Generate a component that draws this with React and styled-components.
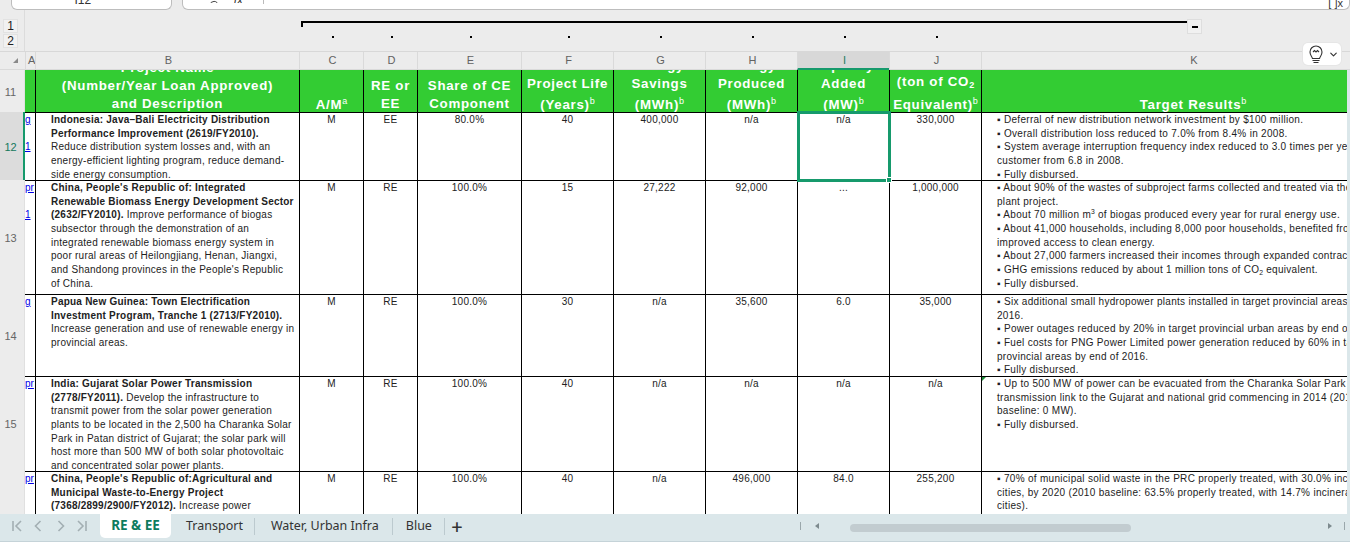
import React from 'react';
import styled, { createGlobalStyle } from 'styled-components';
import { Search, ChevronDown } from 'lucide-react';

const COLUMNS = '25px 10px 264px 64px 54px 104px 92px 92px 92px 92px 92px 423px';

const GlobalStyle = createGlobalStyle`
  html, body {
    margin: 0;
    padding: 0;
    background: #ececec;
    font-family: "Liberation Sans", Arial, sans-serif;
  }
`;

const Page = styled.div`
  position: relative;
  width: 1350px;
  height: 542px;
  display: flex;
  flex-direction: column;
  overflow: hidden;
  background: #ececec;
`;

const TopBar = styled.div`
  height: 10px;
  display: flex;
  gap: 10px;
  padding-left: 11px;
  flex: none;
`;

const TopCard = styled.div`
  box-sizing: border-box;
  height: 10px;
  width: ${({ $width }) => $width}px;
  background: #fff;
  border: 1px solid #bdbdbd;
  border-top: none;
  border-radius: 0 0 6px 6px;
  display: flex;
  align-items: flex-end;
  overflow: hidden;
  font-size: 12px;
  color: #333;
`;

const NameBox = styled.span`
  width: 100%;
  padding-right: 17px;
  box-sizing: border-box;
  text-align: center;
  height: 2px;
  line-height: 0;
  margin-bottom: 7px;
`;

const FormulaTools = styled.div`
  display: flex;
  align-items: flex-end;
  width: 100%;
  height: 9px;
  padding-left: 26px;
  gap: 14px;
`;

const ClippedTool = styled.span`
  display: block;
  height: 3px;
  overflow: hidden;
  margin-bottom: 6px;
  font-style: italic;
  line-height: 0;
`;

const ToolDivider = styled.span`
  width: 1px;
  height: 4px;
  margin: 0 0 5px 6px;
  background: #bbb;
`;

const ExpandMark = styled.span`
  margin-left: auto;
  margin-right: 6px;
  margin-bottom: 6px;
  line-height: 0;
  font-size: 11px;
  color: #333;
`;

const OutlineBand = styled.div`
  box-sizing: border-box;
  height: 42px;
  flex: none;
  display: flex;
  border-bottom: 1px solid #d8d8d8;
`;

const LevelGutter = styled.div`
  box-sizing: border-box;
  width: 25px;
  padding: 9px 0 0 3px;
  display: flex;
  flex-direction: column;
  gap: 1px;
  border-right: 1px solid #dcdcdc;
`;

const LevelButton = styled.div`
  box-sizing: border-box;
  width: 15px;
  height: 14px;
  background: #f1f1f1;
  border: 1px solid #e2e2e2;
  font-size: 12px;
  line-height: 12px;
  text-align: center;
  color: #222;
`;

const OutlinePane = styled.div`
  flex: 1;
  display: flex;
  flex-direction: column;
  padding-top: 9px;
`;

const BracketRow = styled.div`
  display: flex;
  padding-left: 276px;
`;

const Bracket = styled.div`
  box-sizing: border-box;
  width: 886px;
  height: 6px;
  margin-top: 2px;
  border-top: 2px solid #000;
  border-left: 2px solid #000;
`;

const MinusBox = styled.div`
  box-sizing: border-box;
  width: 15px;
  height: 15px;
  background: #f1f1f1;
  border: 1px solid #dedede;
  display: flex;
  align-items: center;
  justify-content: center;
  &::before {
    content: '';
    width: 6px;
    height: 2px;
    background: #000;
  }
`;

const DotRow = styled.div`
  display: grid;
  grid-template-columns: 274px 64px 54px 104px 92px 92px 92px 92px 92px;
  margin-top: 2px;
`;

const DotCell = styled.div`
  display: flex;
  justify-content: center;
  padding-left: 3px;
  &::before {
    content: '';
    width: ${({ $empty }) => ($empty ? 0 : 2)}px;
    height: 2px;
    background: #000;
  }
`;

const ColumnHeaderRow = styled.div`
  display: grid;
  grid-template-columns: ${COLUMNS};
  height: 18px;
  flex: none;
  overflow: hidden;
`;

const ColumnHead = styled.div`
  box-sizing: border-box;
  height: 18px;
  padding-left: 2px;
  background: ${({ $active }) => ($active ? '#d8d8d8' : '#ececec')};
  border-left: 1px solid #dadada;
  border-bottom: ${({ $active }) => ($active ? '2px solid #169a6c' : '1px solid #dadada')};
  font-size: 11px;
  line-height: 17px;
  text-align: center;
  color: ${({ $active }) => ($active ? '#1b7d62' : '#626262')};
`;

const Corner = styled(ColumnHead)`
  border-left: 0;
  display: flex;
  align-items: center;
  justify-content: flex-end;
  padding-right: 7px;
  &::before {
    content: '';
    border-left: 5px solid transparent;
    border-bottom: 5px solid #8a8a8a;
  }
`;

const SheetArea = styled.div`
  flex: 1;
  min-height: 0;
  display: flex;
`;

const SheetClip = styled.div`
  width: 1347px;
  overflow: hidden;
`;

const Sheet = styled.div`
  display: grid;
  width: 1356px;
  grid-template-columns: ${COLUMNS};
  grid-template-rows: 42px 68px 114px 82px 95px 43px;
`;

const VerticalTrack = styled.div`
  flex: 1;
  background: #dbe7ea;
`;

const RowHead = styled.div`
  box-sizing: border-box;
  display: flex;
  align-items: center;
  justify-content: center;
  padding: 1px 3px 0 0;
  font-size: 11px;
  background: ${({ $active }) => ($active ? '#dcdcdc' : '#ececec')};
  color: ${({ $active }) => ($active ? '#14795c' : '#666')};
  border-right: 1px solid ${({ $active }) => ($active ? '#169a6c' : '#e0e0e0')};
  ${({ $active }) => $active && 'box-shadow: inset -1px 0 0 #169a6c;'}
`;

const HeaderCell = styled.div`
  box-sizing: border-box;
  background: #33cc33;
  border-left: 1px solid ${({ $plain }) => ($plain ? '#33cc33' : '#000')};
  display: flex;
  flex-direction: column;
  justify-content: flex-end;
  align-items: center;
  overflow: hidden;
  color: #fff;
  font-weight: 700;
  font-size: 13.3px;
  letter-spacing: 0.73px;
  white-space: nowrap;
`;

const HeaderLine = styled.div`
  flex: none;
  box-sizing: border-box;
  height: ${({ $height }) => $height}px;
  padding-top: ${({ $height }) => $height - 18}px;
  margin-bottom: ${({ $height }) => ($height > 18 ? -1 : 0)}px;
  line-height: 20px;
`;

const Sup = styled.sup`
  font-size: 0.68em;
  font-weight: 400;
  line-height: 0;
  vertical-align: 0.55em;
  letter-spacing: 0;
`;

const Sub = styled.sub`
  font-size: 0.68em;
  line-height: 0;
  vertical-align: -0.25em;
  letter-spacing: 0;
`;

const Cell = styled.div`
  position: relative;
  box-sizing: border-box;
  min-width: 0;
  overflow: ${({ $selected }) => ($selected ? 'visible' : 'hidden')};
  z-index: ${({ $selected }) => ($selected ? 2 : 'auto')};
  background: #fff;
  border-left: 1px solid #000;
  border-top: 1px solid #000;
  font-size: 10px;
  line-height: 13.67px;
  letter-spacing: ${({ $spacing }) => $spacing || 0.25}px;
  color: #222;
  white-space: nowrap;
  text-align: ${({ $align }) => $align || 'left'};
  padding-left: ${({ $indent }) => $indent || 0}px;
  ${({ $selected }) =>
    $selected &&
    `&::after {
      content: '';
      position: absolute;
      inset: -2px -2px -2px -1px;
      border: 3px solid #169a6c;
    }
    &::before {
      content: '';
      box-sizing: border-box;
      position: absolute;
      right: -3px;
      bottom: -3px;
      width: 6px;
      height: 6px;
      background: #169a6c;
      border: 1px solid #fff;
      z-index: 1;
    }`}
  ${({ $comment }) =>
    $comment &&
    `&::before {
      content: '';
      position: absolute;
      left: 0;
      top: 0;
      border-top: 4px solid #1f8f3a;
      border-right: 4px solid transparent;
    }`}
`;

const LinkCell = styled.div`
  box-sizing: border-box;
  overflow: hidden;
  background: #fff;
  border-top: 1px solid #000;
  font-size: 10px;
  line-height: 13.67px;
  white-space: nowrap;
`;

const CutLink = styled.div`
  height: 13.67px;
  color: #0000e6;
  text-decoration: underline;
`;

const Bold = styled.span`
  font-weight: 700;
  letter-spacing: 0.23px;
`;

const Line = styled.div`
  height: 13.67px;
`;

const TabBar = styled.div`
  box-sizing: border-box;
  height: 28px;
  flex: none;
  display: flex;
  background: #dbe7ea;
  border-bottom: 1px solid #c5d3d8;
  font-family: "Noto Sans", "Liberation Sans", sans-serif;
`;

const NavGroup = styled.div`
  width: 100px;
  height: 24px;
  flex: none;
  display: flex;
  align-items: center;
  padding-left: 10px;
  box-sizing: border-box;
  gap: 7px;
  color: #a3afb3;
`;

const NavIcon = styled.svg`
  width: 14px;
  height: 14px;
  fill: none;
  stroke: currentColor;
  stroke-width: 1.6;
  &:nth-child(3) {
    margin-left: 2px;
  }
`;

const ActiveTab = styled.div`
  box-sizing: border-box;
  width: 71px;
  height: 24px;
  flex: none;
  background: #fff;
  border-radius: 0 0 5px 5px;
  text-align: center;
  font-size: 13.5px;
  font-weight: 700;
  line-height: 23px;
  color: #0e7c5e;
`;

const Tab = styled.div`
  flex: none;
  height: 24px;
  box-sizing: border-box;
  padding: 0 ${({ $right }) => $right}px 0 ${({ $left }) => $left}px;
  font-size: 12.5px;
  line-height: 23px;
  color: #333;
  position: relative;
  &::after {
    content: '';
    position: absolute;
    right: 0;
    top: 4px;
    width: 1px;
    height: 17px;
    background: #bccacf;
  }
`;

const AddTab = styled.div`
  width: 24px;
  height: 24px;
  flex: none;
  text-align: center;
  font-size: 20px;
  line-height: 25px;
  font-weight: 500;
  color: #333;
`;

const ScrollGroup = styled.div`
  flex: 1;
  height: 24px;
  display: flex;
  align-items: center;
  padding-left: ${({ $left }) => $left}px;
  box-sizing: border-box;
`;

const ScrollDivider = styled.div`
  width: 1px;
  height: 8px;
  background: #9aa7ab;
  margin: ${({ $margin }) => $margin};
`;

const ScrollArrow = styled.div`
  width: 0;
  height: 0;
  margin-left: ${({ $gap }) => $gap || 0}px;
  border-top: 3px solid transparent;
  border-bottom: 3px solid transparent;
  ${({ $right }) => ($right ? 'border-left' : 'border-right')}: 4px solid #7d8a8e;
`;

const ScrollThumb = styled.div`
  width: 281px;
  height: 8px;
  border-radius: 4px;
  background: #c2ccd0;
  margin: 4px 0 0 31px;
`;

const IdeaButton = styled.div`
  position: absolute;
  left: 1303px;
  top: 43px;
  width: 38px;
  height: 22px;
  box-sizing: border-box;
  padding-left: 4px;
  border-radius: 5px;
  background: #fff;
  box-shadow: 0 0 0 1px #e6e6e6;
  display: flex;
  align-items: center;
  gap: 3px;
  color: #333;
`;

const headers = [
  { plain: true, lines: [] },
  { lines: ['Project Name', '(Number/Year Loan Approved)', 'and Description'] },
  { lines: [<React.Fragment key="a">A/M<Sup>a</Sup></React.Fragment>], last: 21 },
  { lines: ['RE or', 'EE'] },
  { lines: ['Share of CE', 'Component'] },
  { lines: ['Project Life', <React.Fragment key="b">(Years)<Sup>b</Sup></React.Fragment>], last: 21 },
  { lines: ['Energy', 'Savings', <React.Fragment key="b">(MWh)<Sup>b</Sup></React.Fragment>], last: 21 },
  { lines: ['Energy', 'Produced', <React.Fragment key="b">(MWh)<Sup>b</Sup></React.Fragment>], last: 21 },
  { lines: ['Capacity', 'Added', <React.Fragment key="b">(MW)<Sup>b</Sup></React.Fragment>], last: 21 },
  { lines: [<React.Fragment key="c">(ton of CO<Sub>2</Sub></React.Fragment>, <React.Fragment key="b">Equivalent)<Sup>b</Sup></React.Fragment>], last: 23 },
  { lines: [<React.Fragment key="b">Target Results<Sup>b</Sup></React.Fragment>], last: 21 },
];

const rows = [
  {
    num: 12,
    active: true,
    link: ['g', '', '1'],
    project: [
      ['Indonesia: Java–Bali Electricity Distribution', ''],
      ['Performance Improvement (2619/FY2010).', ''],
      ['', 'Reduce distribution system losses and, with an'],
      ['', 'energy-efficient lighting program, reduce demand-'],
      ['', 'side energy consumption.'],
    ],
    values: ['M', 'EE', '80.0%', '40', '400,000', 'n/a', 'n/a', '330,000'],
    results: [
      '▪ Deferral of new distribution network investment by $100 million.',
      '▪ Overall distribution loss reduced to 7.0% from 8.4% in 2008.',
      '▪ System average interruption frequency index reduced to 3.0 times per year per',
      'customer from 6.8 in 2008.',
      '▪ Fully disbursed.',
    ],
  },
  {
    num: 13,
    link: ['pr', '', '1'],
    project: [
      ["China, People's Republic of: Integrated", ''],
      ['Renewable Biomass Energy Development Sector', ''],
      ['(2632/FY2010).', ' Improve performance of biogas'],
      ['', 'subsector through the demonstration of an'],
      ['', 'integrated renewable biomass energy system in'],
      ['', 'poor rural areas of Heilongjiang, Henan, Jiangxi,'],
      ['', "and Shandong provinces in the People's Republic"],
      ['', 'of China.'],
    ],
    values: ['M', 'RE', '100.0%', '15', '27,222', '92,000', '...', '1,000,000'],
    results: [
      '▪ About 90% of the wastes of subproject farms collected and treated via the biogas',
      'plant project.',
      <React.Fragment key="m">▪ About 70 million m<Sup>3</Sup> of biogas produced every year for rural energy use.</React.Fragment>,
      '▪ About 41,000 households, including 8,000 poor households, benefited from',
      'improved access to clean energy.',
      '▪ About 27,000 farmers increased their incomes through expanded contract',
      <React.Fragment key="c">▪ GHG emissions reduced by about 1 million tons of CO<Sub>2</Sub> equivalent.</React.Fragment>,
      '▪ Fully disbursed.',
    ],
  },
  {
    num: 14,
    link: ['g'],
    project: [
      ['Papua New Guinea: Town Electrification', ''],
      ['Investment Program, Tranche 1 (2713/FY2010).', ''],
      ['', 'Increase generation and use of renewable energy in'],
      ['', 'provincial areas.'],
    ],
    values: ['M', 'RE', '100.0%', '30', 'n/a', '35,600', '6.0', '35,000'],
    results: [
      '▪ Six additional small hydropower plants installed in target provincial areas by',
      '2016.',
      '▪ Power outages reduced by 20% in target provincial urban areas by end of 2016.',
      '▪ Fuel costs for PNG Power Limited power generation reduced by 60% in target',
      'provincial areas by end of 2016.',
      '▪ Fully disbursed.',
    ],
  },
  {
    num: 15,
    link: ['pr'],
    comment: true,
    project: [
      ['India: Gujarat Solar Power Transmission', ''],
      ['(2778/FY2011).', ' Develop the infrastructure to'],
      ['', 'transmit power from the solar power generation'],
      ['', 'plants to be located in the 2,500 ha Charanka Solar'],
      ['', 'Park in Patan district of Gujarat; the solar park will'],
      ['', 'host more than 500 MW of both solar photovoltaic'],
      ['', 'and concentrated solar power plants.'],
    ],
    values: ['M', 'RE', '100.0%', '40', 'n/a', 'n/a', 'n/a', 'n/a'],
    results: [
      '▪ Up to 500 MW of power can be evacuated from the Charanka Solar Park over a',
      'transmission link to the Gujarat and national grid commencing in 2014 (2010',
      'baseline: 0 MW).',
      '▪ Fully disbursed.',
    ],
  },
  {
    num: '',
    link: ['pr'],
    project: [
      ["China, People's Republic of:Agricultural and", ''],
      ['Municipal Waste-to-Energy Project', ''],
      ['(7368/2899/2900/FY2012).', ' Increase power'],
    ],
    values: ['M', 'RE', '100.0%', '40', 'n/a', '496,000', '84.0', '255,200'],
    results: [
      '▪ 70% of municipal solid waste in the PRC properly treated, with 30.0% incinerated in',
      'cities, by 2020 (2010 baseline: 63.5% properly treated, with 14.7% incinerated in',
      'cities).',
    ],
  },
];

const letters = ['A', 'B', 'C', 'D', 'E', 'F', 'G', 'H', 'I', 'J', 'K'];

const BulbIcon = () => (
  <svg width="18" height="20" viewBox="0 0 18 20" fill="none" stroke="#333" strokeWidth="1.1">
    <path d="M5.500 14.500C5 12.500 3 11.500 3 8a6 6 0 0 1 12 0c0 3.500-2 4.500-2.500 6.500z" />
    <path d="M6 8l1.500-1.500L9 8l1.500-1.500L12 8" />
    <path d="M5.500 16.500h7M6.500 18.500h5" />
  </svg>
);

const App = () => (
  <Page>
    <GlobalStyle />
    <TopBar>
      <TopCard $width={161}>
        <NameBox>I12</NameBox>
      </TopCard>
      <TopCard $width={1170}>
        <FormulaTools>
          <ClippedTool><Search size={11} /></ClippedTool>
          <ClippedTool>fx</ClippedTool>
          <ToolDivider />
          <ExpandMark>[ ]x</ExpandMark>
        </FormulaTools>
      </TopCard>
    </TopBar>

    <OutlineBand>
      <LevelGutter>
        <LevelButton>1</LevelButton>
        <LevelButton>2</LevelButton>
      </LevelGutter>
      <OutlinePane>
        <BracketRow>
          <Bracket />
          <MinusBox />
        </BracketRow>
        <DotRow>
          <DotCell $empty />
          {[0, 1, 2, 3, 4, 5, 6, 7].map((n) => (
            <DotCell key={n} />
          ))}
        </DotRow>
      </OutlinePane>
    </OutlineBand>

    <ColumnHeaderRow>
      <Corner />
      {letters.map((l) => (
        <ColumnHead key={l} $active={l === 'I'}>{l}</ColumnHead>
      ))}
    </ColumnHeaderRow>

    <SheetArea>
      <SheetClip>
        <Sheet>
          <RowHead>11</RowHead>
          {headers.map((h, i) => (
            <HeaderCell key={i} $plain={h.plain}>
              {h.lines.map((line, j) => (
                <HeaderLine key={j} $height={h.last && j === h.lines.length - 1 ? h.last : 18}>{line}</HeaderLine>
              ))}
            </HeaderCell>
          ))}

          {rows.map((row) => (
            <React.Fragment key={row.project[0][0]}>
              <RowHead $active={row.active}>{row.num}</RowHead>
              <LinkCell>
                {row.link.map((t, i) => (
                  <CutLink key={i}>{t}</CutLink>
                ))}
              </LinkCell>
              <Cell $indent={15}>
                {row.project.map(([bold, text], i) => (
                  <Line key={i}>
                    <Bold>{bold}</Bold>
                    {text}
                  </Line>
                ))}
              </Cell>
              {row.values.map((v, i) => (
                <Cell key={i} $align="center" $selected={row.active && i === 6}>{v}</Cell>
              ))}
              <Cell $indent={15} $spacing={0.3} $comment={row.comment}>
                {row.results.map((r, i) => (
                  <Line key={i}>{r}</Line>
                ))}
              </Cell>
            </React.Fragment>
          ))}
        </Sheet>
      </SheetClip>
      <VerticalTrack />
    </SheetArea>

    <TabBar>
      <NavGroup>
        <NavIcon viewBox="0 0 14 14"><path d="M3 2v10M11 2L6 7l5 5" /></NavIcon>
        <NavIcon viewBox="0 0 14 14"><path d="M9.500 2L4.500 7l5 5" /></NavIcon>
        <NavIcon viewBox="0 0 14 14"><path d="M4.500 2l5 5-5 5" /></NavIcon>
        <NavIcon viewBox="0 0 14 14"><path d="M11 2v10M3 2l5 5-5 5" /></NavIcon>
      </NavGroup>
      <ActiveTab>RE &amp; EE</ActiveTab>
      <Tab $left={15} $right={12}>Transport</Tab>
      <Tab $left={16} $right={14}>Water, Urban Infra</Tab>
      <Tab $left={13} $right={13}>Blue</Tab>
      <AddTab>+</AddTab>
      <ScrollGroup $left={331}>
        <ScrollDivider $margin="0 14px 0 0" />
        <ScrollArrow />
        <ScrollThumb />
        <ScrollArrow $right $gap={197} />
        <ScrollDivider $margin="0 0 0 12px" />
      </ScrollGroup>
    </TabBar>

    <IdeaButton>
      <BulbIcon />
      <ChevronDown size={11} strokeWidth={2.5} />
    </IdeaButton>
  </Page>
);

export default App;
